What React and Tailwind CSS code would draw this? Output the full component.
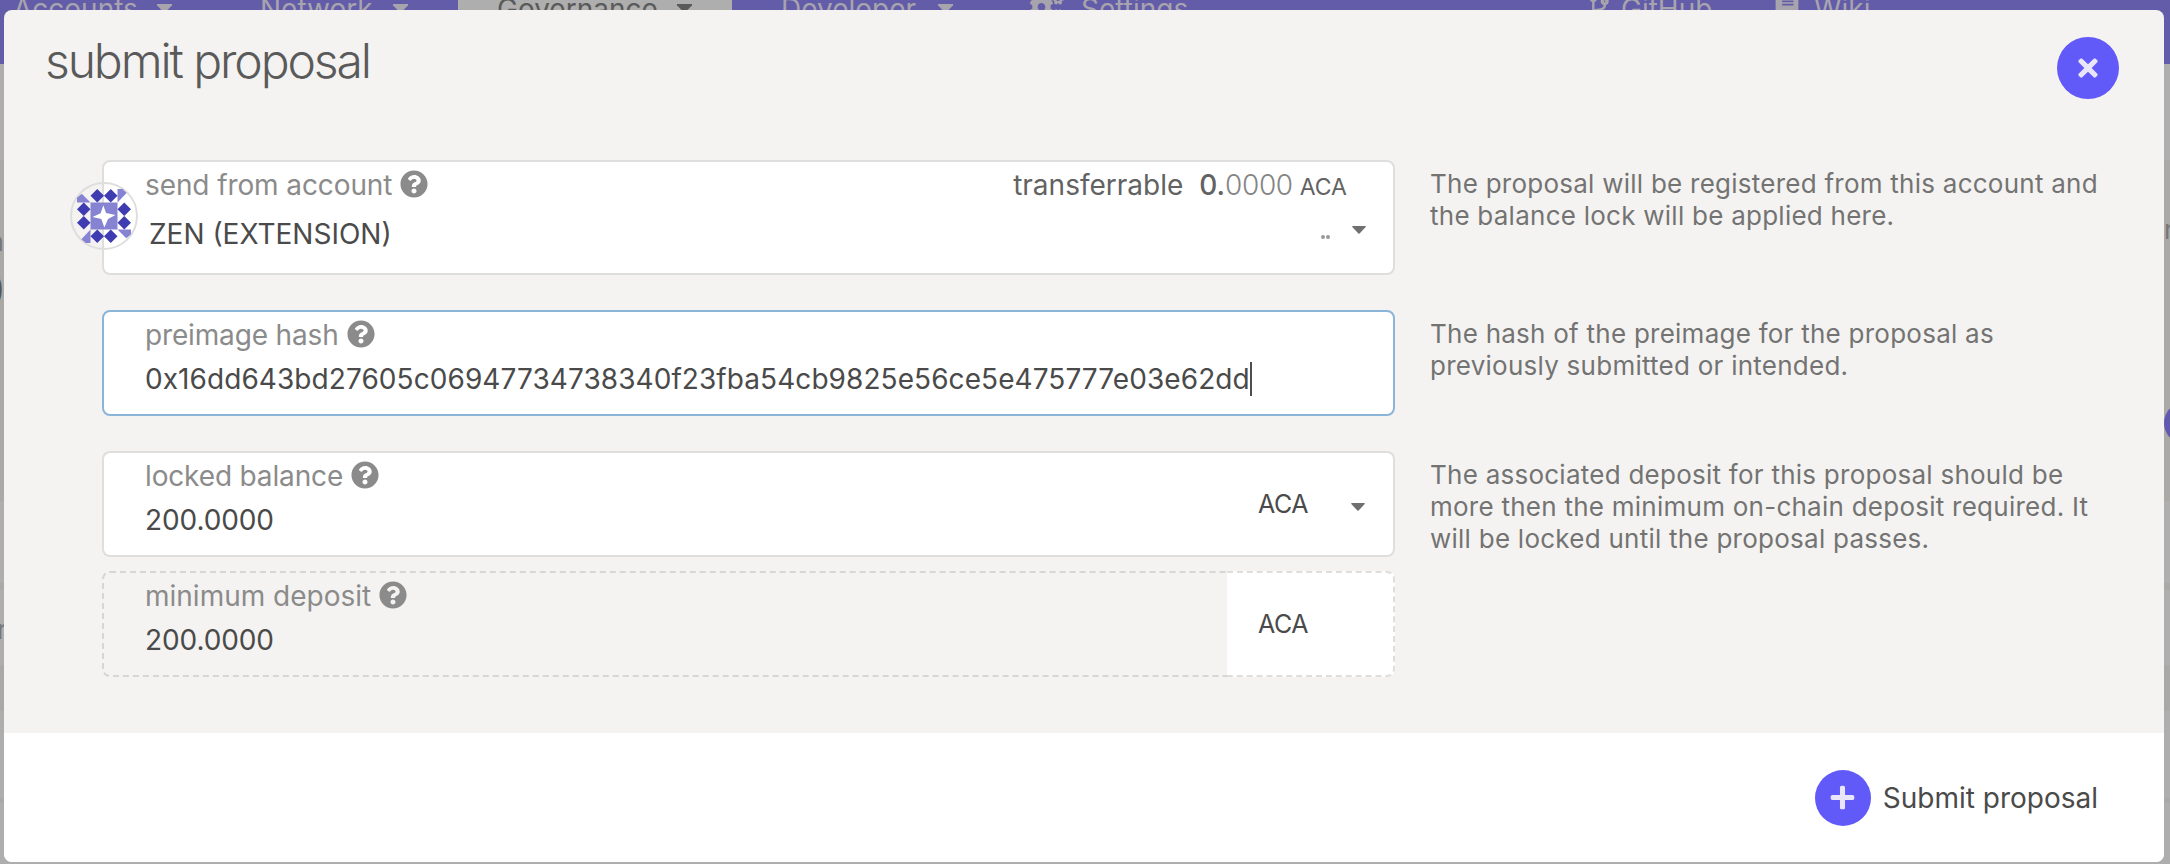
import { FaQuestionCircle, FaTimes, FaPlus, FaCogs, FaCodeBranch, FaBook } from 'react-icons/fa';

function Caret({ className }) {
  return (
    <svg viewBox="0 0 14 8" className={className} fill="currentColor">
      <path d="M0.3 0H13.7V1L7.6 7.6Q7 8.1 6.4 7.6L0.3 1Z" />
    </svg>
  );
}

function Label({ children, className = 'tracking-[-0.15px]' }) {
  return (
    <div className="flex h-[34px] items-center gap-[8px] whitespace-nowrap text-[#8b8b8b]">
      <span className={className}>{children}</span>
      <FaQuestionCircle className="size-[28px] -translate-y-px" />
    </div>
  );
}

const DIAMONDS = [[60, 20], [100, 20], [20, 60], [20, 100], [140, 60], [140, 100], [60, 140], [100, 140]];

function Identicon() {
  return (
    <div className="absolute top-[20px] -left-[34px] flex size-[68px] items-center justify-center rounded-full border-2 border-[#dededd]">
      <svg viewBox="0 0 160 160" className="size-[54px]">
        <g fill="#8783d3">
          <path d="M0 40V26L14 14L40 40Z" />
          <path d="M120 0H135L147 12L120 40Z" />
          <path d="M120 120H160V134L146 146Z" />
          <path d="M40 160H26L13 149L40 120Z" />
          <path d="M40 40H120V120H40Z" />
        </g>
        {DIAMONDS.map(([x, y]) => (
          <path key={x + '-' + y} fill="#3f3bb0" d={`M${x - 20} ${y}L${x} ${y - 20}L${x + 20} ${y}L${x} ${y + 20}Z`} />
        ))}
        <path d="M78 48L86 71L114 77L92 89L81 114L72 89L46 83L70 72Z" fill="#fff" />
      </svg>
    </div>
  );
}

function Help({ lines }) {
  return (
    <div className="w-[690px] pt-[8px] text-[26px] leading-[32px] tracking-[0.25px] whitespace-nowrap text-[#737373]">
      {lines.map((line) => (
        <p key={line}>{line}</p>
      ))}
    </div>
  );
}

function Backdrop() {
  return (
    <div className="flex h-[864px] w-[2170px] flex-col bg-[#aeaeae]">
      <div className="h-[64px] shrink-0 overflow-hidden bg-[#635ca8] text-[28px] text-[#a7a4ae]">
        <div className="-mt-[11px] flex h-[40px] items-center whitespace-nowrap">
          <div className="flex w-[458px] shrink-0 items-center pl-[13px]">
            <span className="w-[143px]">Accounts</span>
            <Caret className="mt-[-2px] h-[9px] w-[17px]" />
            <span className="ml-[87px] w-[132px]">Network</span>
            <Caret className="mt-[-2px] h-[9px] w-[17px]" />
          </div>
          <div className="flex h-[90px] w-[274px] shrink-0 items-center bg-[#aeaeae] pl-[39px] text-[#5a5a5a]">
            <span className="w-[179px]">Governance</span>
            <Caret className="mt-[-2px] h-[9px] w-[17px]" />
          </div>
          <div className="flex shrink-0 items-center pl-[49px]">
            <span className="w-[156px]">Developer</span>
            <Caret className="mt-[-2px] h-[9px] w-[17px]" />
            <FaCogs className="mt-[-4px] ml-[76px] size-[34px]" />
            <span className="ml-[17px] w-[505px]">Settings</span>
            <FaCodeBranch className="mt-[-4px] size-[26px]" />
            <span className="ml-[9px] w-[153px]">GitHub</span>
            <FaBook className="mt-[-4px] size-[26px]" />
            <span className="ml-[14px]">Wiki</span>
          </div>
        </div>
      </div>
      <div className="h-[96px] shrink-0" />
      <div className="flex h-[341px] shrink-0 justify-between overflow-hidden bg-[#aaa9a6] text-[#777]">
        <div className="w-[4px] pt-[66px]">
          <div className="-ml-[12px] w-[16px] text-right text-[27px] leading-[32px]">a</div>
          <div className="-ml-[25px] text-[48px] leading-[64px] font-light text-[#555]">0</div>
        </div>
        <div className="w-[6px] pt-[53px]">
          <div className="text-[26px] leading-[34px]">r</div>
          <div className="mt-[155px] size-[42px] rounded-full bg-[#6159b0]" />
        </div>
      </div>
      <div className="h-[82px] shrink-0" />
      <div className="h-[7px] shrink-0 bg-[#a9a9a7]" />
      <div className="h-[75px] shrink-0 pt-[22px] text-[#777]">
        <div className="-ml-[3px] text-[26px] leading-[36px]">r</div>
      </div>
      <div className="h-[46px] shrink-0 bg-[#a9a9a7]" />
      <div className="h-[87px] shrink-0" />
      <div className="h-[5px] shrink-0 bg-[#a9a9a7]" />
    </div>
  );
}

export default function App() {
  return (
    <div className="relative h-[864px] w-[2170px] overflow-hidden font-['Inter',sans-serif] text-[28px] text-[#4a4a4a]">
      <Backdrop />
      <div className="absolute top-[10px] left-[4px] flex h-[852px] w-[2160px] flex-col overflow-hidden rounded-[8px] bg-[#f4f3f1]">
        <div className="flex h-[150px] shrink-0 items-start justify-between pr-[45px] pl-[41px]">
          <h1 className="pt-[19px] text-[48px] leading-[64px] font-light tracking-[-2.1px] text-[#5a5a5a]">submit proposal</h1>
          <button className="mt-[27px] flex size-[62px] items-center justify-center rounded-full bg-[#6159f8] text-[#eae6f9]">
            <FaTimes className="size-[28px]" />
          </button>
        </div>
        <div className="flex flex-col pl-[98px]">
          <div className="flex h-[150px] gap-[35px]">
            <div className="relative h-[115px] w-[1293px] shrink-0 rounded-[8px] border-2 border-[#dededd] bg-white pl-[41px]">
              <Identicon />
              <div className="mt-[6px] flex h-[34px] items-center justify-between pr-[46px]">
                <Label className="tracking-[-0.1px]">send from account</Label>
                <div className="flex items-baseline text-[#626262]">
                  <span className="mr-[16px]">transferrable</span>
                  <span className="font-medium">0.</span>
                  <span className="mr-[7px] font-light tracking-[-0.4px] text-[#858585]">0000</span>
                  <span className="text-[23px]">ACA</span>
                </div>
              </div>
              <div className="mt-[13px] flex h-[38px] items-center justify-between pr-[27px] pl-[4px]">
                <span className="-mt-px">ZEN (EXTENSION)</span>
                <span className="flex items-center gap-[22px] text-[#707070]">
                  <span className="mt-[6px] flex gap-[1px]">
                    <i className="size-[4px] rounded-full bg-[#999]" />
                    <i className="size-[4px] rounded-full bg-[#999]" />
                  </span>
                  <Caret className="mb-[8px] h-[8px] w-[14px]" />
                </span>
              </div>
            </div>
            <Help lines={['The proposal will be registered from this account and', 'the balance lock will be applied here.']} />
          </div>
          <div className="flex h-[141px] gap-[35px]">
            <div className="h-[106px] w-[1293px] shrink-0 rounded-[8px] border-2 border-[#8bb5d8] bg-white pl-[41px]">
              <div className="mt-[6px]"><Label>preimage hash</Label></div>
              <div className="mt-[8px] flex h-[38px] items-center">
                <span className="tracking-[0.07px]">0x16dd643bd27605c06947734738340f23fba54cb9825e56ce5e475777e03e62dd</span>
                <i className="h-[34px] w-[2px] bg-[#4e4e4e]" />
              </div>
            </div>
            <Help lines={['The hash of the preimage for the proposal as', 'previously submitted or intended.']} />
          </div>
          <div className="flex gap-[35px]">
            <div className="flex w-[1293px] shrink-0 flex-col gap-[14px]">
              <div className="flex h-[106px]">
                <div className="flex-1 rounded-l-[8px] border-y-2 border-l-2 border-[#dededd] bg-white pl-[41px]">
                  <div className="mt-[6px]"><Label>locked balance</Label></div>
                  <div className="mt-[8px] leading-[38px] tracking-[-0.1px]">200.0000</div>
                </div>
                <div className="flex w-[168px] items-center justify-between rounded-r-[8px] border-y-2 border-r-2 border-[#dededd] bg-white pr-[28px] pl-[31px]">
                  <span className="mt-[2px] text-[25px] tracking-[-0.4px]">ACA</span>
                  <Caret className="mt-[5px] h-[8px] w-[14px] text-[#707070]" />
                </div>
              </div>
              <div className="flex h-[106px]">
                <div className="flex-1 rounded-l-[8px] border-y-2 border-l-2 border-dashed border-[#d6d6d5] pl-[41px]">
                  <div className="mt-[6px]"><Label className="tracking-[0px]">minimum deposit</Label></div>
                  <div className="mt-[8px] leading-[38px] tracking-[-0.1px]">200.0000</div>
                </div>
                <div className="flex w-[168px] items-center rounded-r-[8px] border-y-2 border-r-2 border-dashed border-[#dededd] bg-white pl-[31px]">
                  <span className="mt-[2px] text-[25px] tracking-[-0.4px]">ACA</span>
                </div>
              </div>
            </div>
            <Help lines={['The associated deposit for this proposal should be', 'more then the minimum on-chain deposit required. It', 'will be locked until the proposal passes.']} />
          </div>
        </div>
        <div className="mt-auto flex h-[129px] shrink-0 items-center justify-end gap-[12px] bg-white pr-[66px]">
          <span className="flex size-[56px] items-center justify-center rounded-full bg-[#6159f8] text-[#eae6f9]">
            <FaPlus className="size-[27px]" />
          </span>
          <span>Submit proposal</span>
        </div>
      </div>
    </div>
  );
}
